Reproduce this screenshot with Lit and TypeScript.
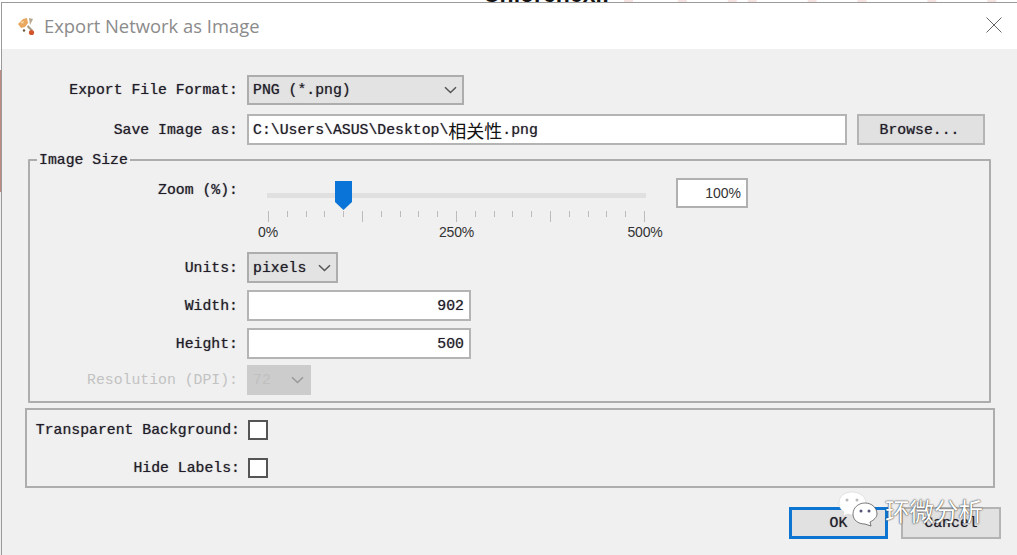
import { LitElement, html, css, svg } from "lit";
import { customElement } from "lit/decorators.js";

const chevron = html`<svg class="chev" width="13" height="8" viewBox="0 0 13 8"><path d="M1 1.2 L6.5 6.5 L12 1.2" fill="none" stroke="currentColor" stroke-width="1.5"/></svg>`;

const ticks = Array.from({ length: 21 }, (_, i) => i % 5 === 0);

@customElement("app-root")
export class AppRoot extends LitElement {
  static styles = css`
    :host { display: block; width: 1017px; height: 555px; overflow: hidden; position: relative; background: #fff;
      font-family: "Liberation Mono", "Noto Sans CJK SC", monospace; font-size: 14.8px; color: #1f1b28; text-shadow: 0 0 1px rgba(30,25,45,.6); }
    .page { display: grid; grid-template-columns: 1px 1fr; grid-template-rows: 2px 553px; height: 555px; }
    .strip { grid-column: 1 / 3; height: 2px; overflow: hidden; display: flex; background: #fff; }
    .strip-text { margin: -17px 0 0 483px; font: bold 23px/23px "Liberation Sans", sans-serif; color: #111; height: 23px; white-space: nowrap; width: 130px; text-shadow: none; }
    .strip svg { margin-left: 5px; }
    .edge { background: linear-gradient(#fff 68px, #c08a82 68px, #c08a82 190px, #eee 190px); }
    .win { border-left: 1px solid #9a9a9a; border-top: 1px solid #9a9a9a; background: #f0f0f0; display: flex; flex-direction: column; }
    .title { height: 46px; background: #fff; display: flex; align-items: center; padding: 0 15px 0 15px; flex: none; }
    .title-text { font: 18.4px/24px "Open Sans", sans-serif; color: #8b8b8b; margin-left: 9px; flex: 1; text-shadow: none; }
    .close { margin-bottom: 2px; }
    .body { flex: 1; display: flex; flex-direction: column; }
    .row { display: flex; align-items: center; }
    .r1 { margin-top: 26px; height: 30px; }
    .r2 { margin-top: 9px; height: 31px; }
    .label { text-align: right; white-space: pre; flex: none; margin-right: 9px; }
    .top-label { width: 236px; }
    .field { box-sizing: border-box; border: 2px solid #b4b4b4; background: #fff; display: flex; align-items: center; white-space: pre; padding: 0 4px; height: 100%; }
    .sel { background: #e3e3e3; border-color: #adadad; justify-content: space-between; padding: 0 5px 0 4px; }
    .chev { color: #555; flex: none; }
    .format { width: 217px; }
    .path { width: 600px; }
    .cjk { font: 18px "Noto Sans CJK SC", sans-serif; color: #111; text-shadow: none; }
    .btn { box-sizing: border-box; height: 100%; background: #e1e1e1; border: 2px solid #b4b4b4; display: flex; align-items: center; justify-content: center; }
    .browse { width: 128px; margin-left: 10px; padding-right: 3px; }
    fieldset { margin: 6px 0 0 26px; padding: 9px 0 0 0; width: 963px; height: 252px; box-sizing: border-box; border: 2px solid #adadad; border-radius: 1px; min-width: 0; }
    legend { margin-left: 7px; padding: 2px 2px 0; line-height: 15px; font-size: 14.8px; }
    .set-label { width: 208px; }
    .zoom { height: 62px; align-items: flex-start; }
    .zoom .label { margin-top: 5px; }
    .slider { margin-left: 20px; margin-top: 10px; width: 379px; display: flex; flex-direction: column; position: relative; padding-top: 6px; flex: none; }
    .track { height: 5px; background: #e0e0e0; }
    .thumb { position: absolute; left: 68px; top: -6px; }
    .ticks { display: flex; justify-content: space-between; align-items: flex-start; margin-top: 13px; padding: 0 1px; }
    .tick { width: 1px; height: 6px; background: #bcbcbc; }
    .tick.major { height: 11px; }
    .scale { display: flex; justify-content: space-between; margin: 1px -19px 0; font: 14px/18px "Liberation Sans", sans-serif; color: #333; letter-spacing: -0.2px; text-shadow: none; }
    .scale span { width: 40px; text-align: center; }
    .pct { width: 72px; height: 30px; margin-left: 30px; margin-top: 1px; justify-content: flex-end; font: 14px "Liberation Sans", sans-serif; color: #333; padding: 0 5px; flex: none; border-color: #b0b0b0; text-shadow: none; }
    .units { margin-top: 13px; height: 31px; }
    .units .field { width: 91px; }
    .size { margin-top: 7px; height: 31px; }
    .size .field { width: 224px; justify-content: flex-end; padding-right: 5px; }
    .dpi { margin-top: 6px; height: 30px; }
    .dpi .label { color: #c2c2c2; text-shadow: none; }
    .dpi .field { width: 64px; background: #ccc; border-color: #ccc; color: #c0c0c0; text-shadow: none; }
    .dpi .chev { color: #999; }
    .group { margin: 5px 0 0 23px; width: 970px; height: 80px; box-sizing: border-box; border: 2px solid #adadad; padding-top: 10px; flex: none; }
    .check-row { height: 20px; }
    .check-row + .check-row { margin-top: 18px; }
    .check-label { width: 213px; margin-right: 8px; }
    .box { width: 20px; height: 20px; box-sizing: border-box; border: 2px solid #555; background: #fff; flex: none; }
    .actions { display: flex; margin: 19px 0 0 787px; height: 32px; }
    .ok { width: 99px; border: 3px solid #0b75d1; }
    .cancel { width: 100px; margin-left: 13px; }
    .mark { position: absolute; left: 838px; top: 491px; display: flex; align-items: center; pointer-events: none; }
    .mark-text { font: 400 24.5px/30px "Noto Sans CJK SC", sans-serif; color: #fff; margin-left: 7px; margin-top: 4px; text-shadow: 0 0 1px #333, 0 0 2px #555; white-space: nowrap; }
  `;

  render() {
    return html`
      <div class="page">
        <div class="strip">
          <div class="strip-text">Chlorchexi:</div>
          <svg width="400" height="2" viewBox="0 0 400 2">${[6, 60, 110, 130, 190, 240, 310, 370].map(
            (x) => svg`<rect x=${x} y="0" width="9" height="2" fill="#f4e3e0"/>`
          )}</svg>
        </div>
        <div class="edge"></div>
        <div class="win">
          <div class="title">
            <svg width="18" height="19" viewBox="0 0 18 19">
              <path d="M1 7 L6 2 L10 1 L11 6 L8 10 L4 11 Z" fill="#eaa760"/>
              <path d="M3 5 L7 4 L6 7 Z" fill="#f6d9a8"/>
              <path d="M12 1 L16 2 L13 8 Z" fill="#b5a890"/>
              <path d="M11 8 L16 13 L14 14 L10 10 Z" fill="#a89a80"/>
              <circle cx="14.5" cy="15.5" r="2.6" fill="#d2552c"/>
              <circle cx="7" cy="13.5" r="1.2" fill="#6b5a3c"/>
            </svg>
            <div class="title-text">Export Network as Image</div>
            <svg class="close" width="16" height="16" viewBox="0 0 16 16"><path d="M0.5 0.5 L15.5 15.5 M15.5 0.5 L0.5 15.5" stroke="#666" stroke-width="1" fill="none"/></svg>
          </div>
          <div class="body">
            <div class="row r1">
              <div class="label top-label">Export File Format:</div>
              <div class="field sel format"><span>PNG (*.png)</span>${chevron}</div>
            </div>
            <div class="row r2">
              <div class="label top-label">Save Image as:</div>
              <div class="field path"><span>C:\\Users\\ASUS\\Desktop\\</span><span class="cjk">相关性</span><span>.png</span></div>
              <div class="btn browse">Browse...</div>
            </div>
            <fieldset>
              <legend>Image Size</legend>
              <div class="row zoom">
                <div class="label set-label">Zoom (%):</div>
                <div class="slider">
                  <div class="track"></div>
                  <svg class="thumb" width="17" height="29" viewBox="0 0 17 29"><path d="M0 0 H17 V21 L8.5 29 L0 21 Z" fill="#0a74d8"/></svg>
                  <div class="ticks">${ticks.map((m) => html`<div class="tick ${m ? "major" : ""}"></div>`)}</div>
                  <div class="scale"><span>0%</span><span>250%</span><span>500%</span></div>
                </div>
                <div class="field pct">100%</div>
              </div>
              <div class="row units">
                <div class="label set-label">Units:</div>
                <div class="field sel"><span>pixels</span>${chevron}</div>
              </div>
              <div class="row size">
                <div class="label set-label">Width:</div>
                <div class="field">902</div>
              </div>
              <div class="row size">
                <div class="label set-label">Height:</div>
                <div class="field">500</div>
              </div>
              <div class="row dpi">
                <div class="label set-label">Resolution (DPI):</div>
                <div class="field sel"><span>72</span>${chevron}</div>
              </div>
            </fieldset>
            <div class="group">
              <div class="row check-row">
                <div class="label check-label">Transparent Background:</div>
                <div class="box"></div>
              </div>
              <div class="row check-row">
                <div class="label check-label">Hide Labels:</div>
                <div class="box"></div>
              </div>
            </div>
            <div class="actions">
              <div class="btn ok">OK</div>
              <div class="btn cancel">Cancel</div>
            </div>
          </div>
        </div>
      </div>
      <div class="mark">
        <svg width="40" height="36" viewBox="0 0 40 36">
          <path d="M14 1 C6 1 1 6 1 12 C1 16 3 19 6 21 L5 25 L10 23 C12 24 14 24 16 24 C24 24 28 18 28 12 C28 6 22 1 14 1 Z" fill="#fff" stroke="#ccc" stroke-width=".5"/>
          <circle cx="9" cy="9" r="1.5" fill="#b9b9b9"/><circle cx="19" cy="9" r="1.5" fill="#b9b9b9"/>
          <path d="M27 12 C20 12 15 17 15 23 C15 29 20 33 27 33 L33 35 L32 31 C36 29 39 26 39 23 C39 17 34 12 27 12 Z" fill="#fff" stroke="#444" stroke-width=".7"/>
          <circle cx="23" cy="20" r="1.5" fill="#557"/><circle cx="31" cy="20" r="1.5" fill="#557"/>
        </svg>
        <div class="mark-text">环微分析</div>
      </div>
    `;
  }
}
